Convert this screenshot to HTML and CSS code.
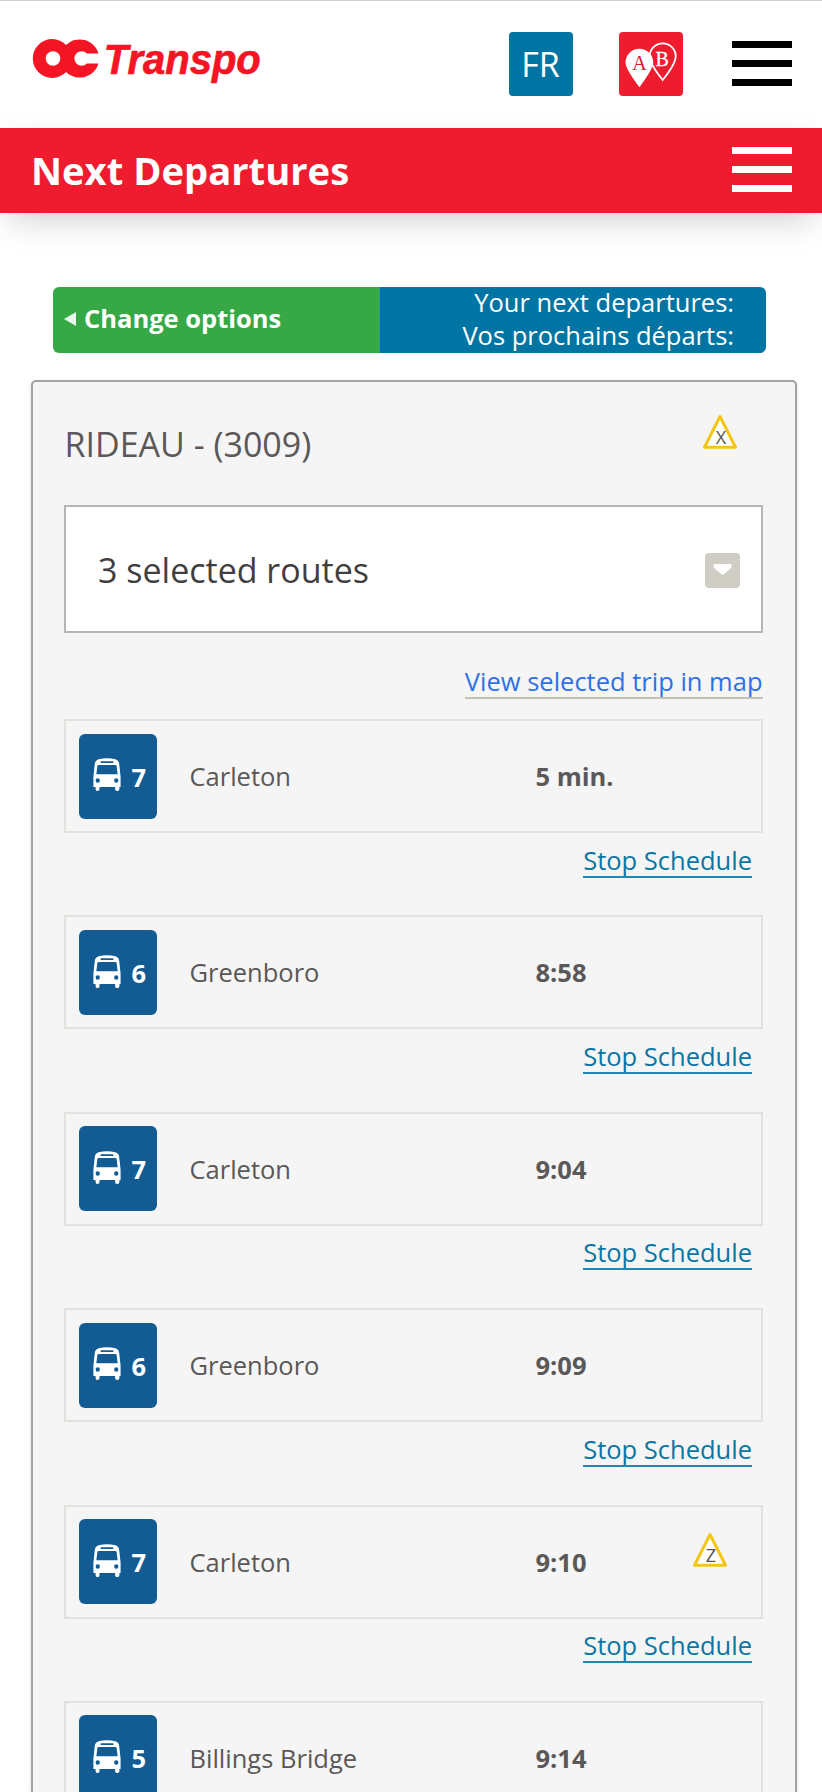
FILE: index.html
```html
<!DOCTYPE html>
<html lang="en">
<head>
<meta charset="utf-8">
<title>OC Transpo - Next Departures</title>
<link rel="stylesheet" href="styles.css">
</head>
<body>
<svg class="defs" width="0" height="0" aria-hidden="true">
  <symbol id="bus" viewBox="0 0 28 34">
    <path fill="#fff" fill-rule="evenodd" d="M5.5 1.2Q14-.8 22.5 1.2Q26 2.2 26.4 6L27.8 19V29.4H26.6V31.5Q26.6 33.6 24.4 33.6Q22.2 33.6 22.2 31.5V29.4H6.4V31.5Q6.4 33.6 4.4 33.6Q2.4 33.6 2.4 31.5V29.4H.2V19L1.6 6Q2 2.2 5.5 1.2ZM8.4 3.4Q7.4 3.4 7.4 4.3T8.4 5.2H19.6Q20.6 5.2 20.6 4.3T19.6 3.4ZM5.4 7.2Q4.4 7.2 4.2 8.4L3.2 16.6H24.8L23.8 8.4Q23.6 7.2 22.6 7.2ZM4.6 20.6A2.2 2.2 0 1 0 4.6 25A2.2 2.2 0 1 0 4.6 20.6ZM23.4 20.6A2.2 2.2 0 1 0 23.4 25A2.2 2.2 0 1 0 23.4 20.6Z"/>
  </symbol>
</svg>
<header class="site-header">
  <svg class="logo" width="230" height="50" viewBox="0 0 230 50" role="img" aria-label="OC Transpo">
    <path fill="#f31524" fill-rule="evenodd" transform="translate(.6 0)" d="M32.5 6A19.4 19.4 0 1 0 32.5 33A19.4 19.4 0 0 0 64.8 24.6H53.3A7.3 7.3 0 1 1 53.3 14.4H64.8A19.4 19.4 0 0 0 32.5 6ZM19.4 12.2A7.3 7.3 0 1 0 19.4 26.8A7.3 7.3 0 1 0 19.4 12.2Z"/>
    <text x="70.8" y="34.7" class="logo-text" textLength="157" lengthAdjust="spacingAndGlyphs">Transpo</text>
  </svg>
  <div class="header-tools">
    <a class="tool lang">FR</a>
    <a class="tool planner">
      <svg width="64" height="64" viewBox="0 0 64 64">
        <path fill="none" stroke="#fff" stroke-width="1.8" d="M43.7 48Q30.7 32 30.7 24.3A13 13 0 0 1 56.7 24.3Q56.7 32 43.7 48Z"/>
        <path fill="#fff" d="M20.4 55.2Q6.5 37 6.5 30.6A13.8 13.8 0 0 1 34.2 30.6Q34.2 37 20.4 55.2Z"/>
        <text class="pin pin-a" x="20.6" y="38">A</text>
        <text class="pin pin-b" x="43.2" y="34">B</text>
      </svg>
    </a>
    <div class="burger"><i></i><i></i><i></i></div>
  </div>
</header>
<div class="title-bar">
  <h1>Next Departures</h1>
  <div class="burger light"><i></i><i></i><i></i></div>
</div>
<main>
  <div class="options">
    <a class="change"><svg width="14" height="16" viewBox="0 0 14 16"><path fill="#e9f6eb" d="M1 8L13 1V15Z"/></svg><span>Change options</span></a>
    <div class="caption"><span>Your next departures:</span><span>Vos prochains départs:</span></div>
  </div>
  <section class="card">
    <div class="stop">
      <h2>RIDEAU - (3009)</h2>
      <svg class="warn" width="36" height="36" viewBox="0 0 36 36"><path fill="#fff" stroke="#f3c614" stroke-width="3" stroke-linejoin="round" d="M18 2.5L33.5 33.2H2.5Z"/><text x="19" y="30.3">X</text></svg>
    </div>
    <div class="select"><span>3 selected routes</span>
      <svg width="35" height="35" viewBox="0 0 35 35"><rect width="35" height="35" rx="4" fill="#d0cdc5"/><path fill="#fff" d="M9.5 11H25.5Q26.5 11 26.5 12.5V14Q26.3 15 25 16L19.5 20.8Q17.7 22.6 16 20.8L10.2 16Q8.8 15 8.7 14V12.5Q8.7 11 9.5 11Z"/></svg>
    </div>
    <div class="map-line"><a>View selected trip in map</a></div>

    <div class="departure"><div class="row"><div class="badge"><svg class="bus"><use href="#bus"/></svg><b>7</b></div><span class="dest">Carleton</span><b class="time">5 min.</b></div><div class="schedule"><a>Stop Schedule</a></div></div>
    <div class="departure"><div class="row"><div class="badge"><svg class="bus"><use href="#bus"/></svg><b>6</b></div><span class="dest">Greenboro</span><b class="time">8:58</b></div><div class="schedule"><a>Stop Schedule</a></div></div>
    <div class="departure"><div class="row"><div class="badge"><svg class="bus"><use href="#bus"/></svg><b>7</b></div><span class="dest">Carleton</span><b class="time">9:04</b></div><div class="schedule"><a>Stop Schedule</a></div></div>
    <div class="departure"><div class="row"><div class="badge"><svg class="bus"><use href="#bus"/></svg><b>6</b></div><span class="dest">Greenboro</span><b class="time">9:09</b></div><div class="schedule"><a>Stop Schedule</a></div></div>
    <div class="departure"><div class="row"><div class="badge"><svg class="bus"><use href="#bus"/></svg><b>7</b></div><span class="dest">Carleton</span><b class="time">9:10</b><svg class="warn" width="36" height="36" viewBox="0 0 36 36"><path fill="#fff" stroke="#f3c614" stroke-width="3" stroke-linejoin="round" d="M18 2.5L33.5 33.2H2.5Z"/><text x="19" y="30.3">Z</text></svg></div><div class="schedule"><a>Stop Schedule</a></div></div>
    <div class="departure last"><div class="row"><div class="badge"><svg class="bus"><use href="#bus"/></svg><b>5</b></div><span class="dest">Billings Bridge</span><b class="time">9:14</b></div></div>
  </section>
</main>
</body>
</html>
```
FILE: styles.css
```css
* { box-sizing: border-box; }
body {
  margin: 0;
  height: 1792px;
  overflow: hidden;
  background: #fff;
  color: #5a5858;
  font: 25.5px/34px "Open Sans", sans-serif;
}
.defs { display: block; }
.site-header {
  height: 127.5px;
  border-top: 1px solid #d0d0d0;
  padding: 30.5px 30px 0 33px;
  display: flex;
  justify-content: space-between;
  align-items: flex-start;
}
.logo { margin-top: 7px; overflow: visible; }
.logo-text {
  fill: #f31524;
  stroke: #f31524;
  stroke-width: .7px;
  font: italic bold 42px "Liberation Sans", Arial, sans-serif;
}
.header-tools { display: flex; align-items: flex-start; }
.tool {
  width: 64px;
  height: 64px;
  border-radius: 4px;
  color: #fff;
}
.lang {
  background: #0074a2;
  font-size: 34px;
  line-height: 65px;
  text-align: center;
  margin-right: 46px;
}
.planner { background: #ee1c2e; margin-right: 49.5px; }
.planner svg { display: block; }
.pin { font: 20px "Liberation Serif", serif; text-anchor: middle; }
.pin-a { fill: #d01c38; }
.pin-b { fill: #fff; stroke: #fff; stroke-width: .3px; }
.burger {
  width: 60px;
  margin-top: 9.5px;
  display: flex;
  flex-direction: column;
  gap: 12.5px;
}
.burger i { height: 6.5px; background: #000; }
.title-bar {
  height: 85px;
  padding: 0 30px 0 31px;
  display: flex;
  justify-content: space-between;
  background: #ee1c2e;
  box-shadow: 0 12px 36px -8px rgba(0, 0, 0, .22);
}
.title-bar h1 {
  margin: 0;
  color: #fff;
  font-size: 38.2px;
  line-height: 84px;
  font-weight: 700;
}
.burger.light { margin-top: 19.5px; }
.burger.light i { background: #fff; }
.options {
  display: flex;
  width: 713.5px;
  height: 66px;
  margin: 74.5px 0 0 52.5px;
  color: #fff;
}
.change {
  width: 327px;
  padding: 0 0 4px 10.5px;
  border-radius: 6px 0 0 6px;
  display: flex;
  align-items: center;
  gap: 7px;
  background: #37a846;
  font-weight: 700;
}
.change svg { position: relative; top: 1px; }
.caption {
  flex: 1;
  padding-right: 32px;
  border-radius: 0 6px 6px 0;
  display: flex;
  flex-direction: column;
  align-items: flex-end;
  background: #0074a2;
  line-height: 31px;
}
.caption span { height: 33px; }
.card {
  width: 765.5px;
  height: 1412px;
  margin: 27px 0 0 31px;
  padding: 0 32px 0 31px;
  border: 2px solid #a3a3a3;
  border-bottom: 0;
  border-radius: 5px 5px 0 0;
  background: #f5f5f5;
  box-shadow: 0 1px 3px rgba(0, 0, 0, .15);
  overflow: hidden;
}
.stop {
  height: 123px;
  padding: 31.5px 25px 0 .5px;
  display: flex;
  justify-content: space-between;
}
.stop h2 {
  margin: 7.5px 0 0;
  font-size: 34px;
  line-height: 46px;
  font-weight: 400;
}
.warn text { fill: #555; font-size: 18px; text-anchor: middle; }
.select {
  height: 128px;
  padding: 2px 20.5px 0 32px;
  border: 2px solid #b5b5b3;
  display: flex;
  align-items: center;
  justify-content: space-between;
  background: #fff;
  color: #3f3f3f;
  font-size: 34px;
}
.map-line { height: 86px; padding-top: 31px; text-align: right; }
.map-line a {
  display: inline-block;
  height: 33px;
  border-bottom: 2px solid #c4c1b5;
  color: #2d72e4;
  line-height: 31px;
}
.departure { height: 196.4px; }
.departure.last { height: auto; }
.row {
  height: 114px;
  border: 2px solid #e2e2dd;
  padding-left: 13px;
  display: flex;
  align-items: center;
}
.badge {
  width: 78px;
  height: 85px;
  padding-left: 14px;
  border-radius: 6px;
  display: flex;
  align-items: center;
  background: #125c93;
  color: #fff;
}
.bus { width: 28px; height: 33.5px; margin: -2px 10.5px 0 0; }
.badge b { position: relative; top: .5px; }
.dest { width: 346px; margin-left: 32.5px; }
.row .warn { align-self: flex-start; margin: 25px 0 0 auto; }
.row:has(.warn) { padding-right: 32.5px; }
.schedule { padding: 9.5px 10.5px 0 0; text-align: right; }
.schedule a {
  display: inline-block;
  height: 35px;
  border-bottom: 2px solid #2286ae;
  color: #0b75a3;
  line-height: 35px;
}
```
